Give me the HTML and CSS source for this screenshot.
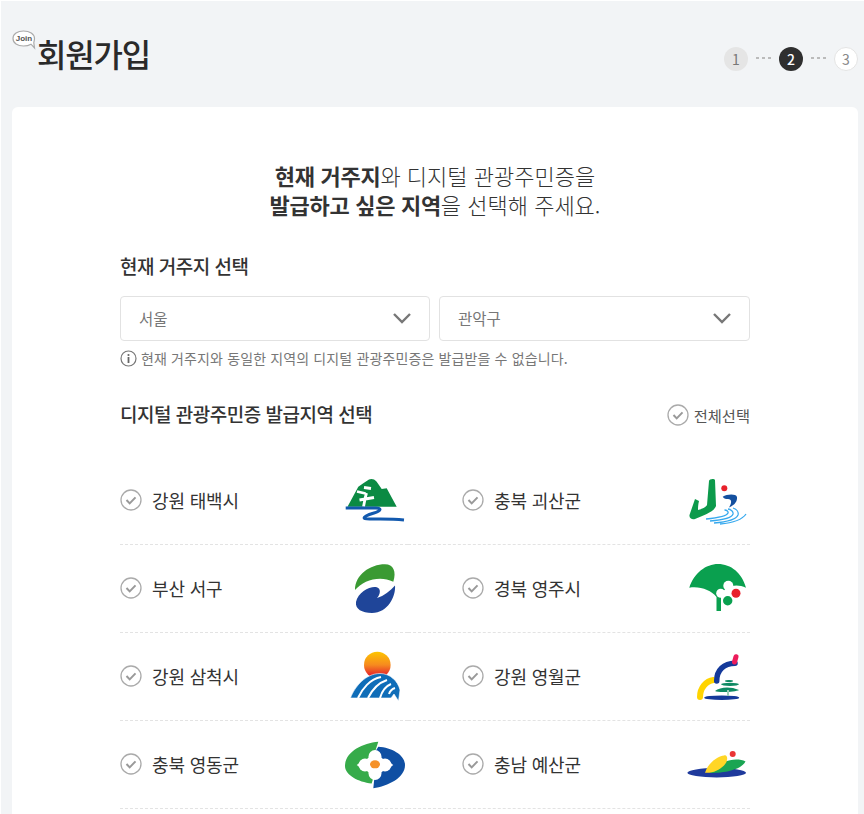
FILE: index.html
```html
<!DOCTYPE html>
<html lang="ko">
<head>
<meta charset="utf-8">
<title>회원가입</title>
<link rel="stylesheet" href="styles.css">
</head>
<body>
<div class="page">
  <header class="head">
    <h1 class="title">
      <svg class="bubble" width="24" height="20" viewBox="0 0 24 20"><path d="M11.500 1C5.500 1 1 3.800 1 8.500S5.500 16 11.500 16c3 0 5.500-.6 7.500-1.800L22.500 18 21.800 12.800C22 11.500 22.500 10 22.500 8.500 22.500 3.800 17.500 1 11.500 1Z" fill="#fff" stroke="#aaa" stroke-width="1.200"/></svg>
      <span class="bubble-text">Join</span>
      회원가입
    </h1>
    <ol class="steps">
      <li class="step step-done">1</li>
      <li class="dots"><i></i><i></i><i></i></li>
      <li class="step step-now">2</li>
      <li class="dots"><i></i><i></i><i></i></li>
      <li class="step step-next">3</li>
    </ol>
  </header>
  <main class="card">
    <p class="lead"><b>현재 거주지</b>와 디지털 관광주민증을<br><b>발급하고 싶은 지역</b>을 선택해 주세요.</p>
    <h2 class="section-title">현재 거주지 선택</h2>
    <div class="selects">
      <div class="select"><span>서울</span><svg width="20" height="12" viewBox="0 0 20 12"><path d="M2 2l8 8 8-8" fill="none" stroke="#777" stroke-width="2.400"/></svg></div>
      <div class="select"><span>관악구</span><svg width="20" height="12" viewBox="0 0 20 12"><path d="M2 2l8 8 8-8" fill="none" stroke="#777" stroke-width="2.400"/></svg></div>
    </div>
    <p class="note"><svg width="17" height="17" viewBox="0 0 17 17"><circle cx="8.500" cy="8.500" r="7.500" fill="none" stroke="#777" stroke-width="1.200"/><circle cx="8.500" cy="5" r="1.100" fill="#666"/><rect x="7.600" y="7" width="1.800" height="6" fill="#666"/></svg>현재 거주지와 동일한 지역의 디지털 관광주민증은 발급받을 수 없습니다.</p>
    <div class="region-head">
      <h2 class="section-title">디지털 관광주민증 발급지역 선택</h2>
      <label class="all"><svg class="check" width="22" height="22" viewBox="0 0 22 22"><circle cx="11" cy="11" r="10" fill="#fff" stroke="#aaa" stroke-width="1.300"/><path d="M6.500 11l3.200 3.400 5.800-6" fill="none" stroke="#999" stroke-width="2"/></svg>전체선택</label>
    </div>
    <ul class="regions">
      <li class="region">
        <svg class="check" width="22" height="22" viewBox="0 0 22 22"><circle cx="11" cy="11" r="10" fill="#fff" stroke="#aaa" stroke-width="1.300"/><path d="M6.500 11l3.200 3.400 5.800-6" fill="none" stroke="#999" stroke-width="2"/></svg>
        <span class="name">강원 태백시</span>
        <svg class="logo" width="64" height="64" viewBox="0 0 64 64"><path d="M3.500 38.700 14.300 18.700 19.300 15.300 25 11.500C27 10.500 30 10.500 32.700 13.700L37.700 21 42.700 20.300 52.700 38.700Z" fill="#0b8a43"/><path d="M19.500 38.700C20.500 34 21 30 22.500 25M13 23.500 21.500 25.500M15.500 32 30 29.500M20 19.500 27 20.500" fill="none" stroke="#fff" stroke-width="2.800"/><path d="M1.700 40H32C38 40 37 43 30 45 23 47 19 49 20.500 50.500 22 52 40 50 60 52" fill="none" stroke="#1259ae" stroke-width="3"/></svg>
      </li>
      <li class="region">
        <svg class="check" width="22" height="22" viewBox="0 0 22 22"><circle cx="11" cy="11" r="10" fill="#fff" stroke="#aaa" stroke-width="1.300"/><path d="M6.500 11l3.200 3.400 5.800-6" fill="none" stroke="#999" stroke-width="2"/></svg>
        <span class="name">충북 괴산군</span>
        <svg class="logo" width="64" height="64" viewBox="0 0 64 64"><path d="M9 31 13 33C12 37 12 40 12 42 16 41 20 39 21 37L23 13C23 11 28 10 29 12L30 38C28 44 18 47 9 51 6 52 3 50 3.500 47Z" fill="#0c9a4b"/><circle cx="38.300" cy="20.300" r="3" fill="#e8212b"/><path d="M36.700 28.700C41 26 50 25.500 51 29 51.500 33 49 37 43 39.500 46 35 46 31 42 31 40 31 38 31 36.700 28.700Z" fill="#14509f"/><path d="M24 53C36 52 46 50 47 46 47.500 43.500 45 41.500 42 41M28 55C40 54 50 52 52 47 53 43.500 50 41 47 40M20 51C30 50 41 48 42 45 42.500 43.500 41 42 38.500 42M34 56C46 55 56 52 60 46" fill="none" stroke="#37a9ee" stroke-width="1.300"/></svg>
      </li>
      <li class="region">
        <svg class="check" width="22" height="22" viewBox="0 0 22 22"><circle cx="11" cy="11" r="10" fill="#fff" stroke="#aaa" stroke-width="1.300"/><path d="M6.500 11l3.200 3.400 5.800-6" fill="none" stroke="#999" stroke-width="2"/></svg>
        <span class="name">부산 서구</span>
        <svg class="logo" width="64" height="64" viewBox="0 0 64 64"><path d="M11 34C11 19 26 8.300 41 8.300 49.300 8.300 52.700 15.700 49.300 25.700 36 19 19.300 24 11 34Z" fill="#3a9a33"/><path d="M12 46C14 36 26 30 32 31 38 32 36 39 33 42 40 40 46 35 51 29.500 52 40 44 57 28 57 18 57 11 53 12 46Z" fill="#1f4599"/></svg>
      </li>
      <li class="region">
        <svg class="check" width="22" height="22" viewBox="0 0 22 22"><circle cx="11" cy="11" r="10" fill="#fff" stroke="#aaa" stroke-width="1.300"/><path d="M6.500 11l3.200 3.400 5.800-6" fill="none" stroke="#999" stroke-width="2"/></svg>
        <span class="name">경북 영주시</span>
        <svg class="logo" width="64" height="64" viewBox="0 0 64 64"><path d="M3.300 31.700C8 17 20 8 32 8 45 8 56 17 60 31.700 50 27 40 30 35 38V55H30.500V41C25 34 14 30 3.300 31.700Z" fill="#0aa04f"/><circle cx="42.300" cy="29.700" r="5" fill="#fff"/><circle cx="34.700" cy="37.300" r="4.500" fill="#fff"/><circle cx="41.700" cy="44.700" r="4.700" fill="#0aa04f"/><circle cx="50" cy="37.300" r="4.500" fill="#e8202c"/></svg>
      </li>
      <li class="region">
        <svg class="check" width="22" height="22" viewBox="0 0 22 22"><circle cx="11" cy="11" r="10" fill="#fff" stroke="#aaa" stroke-width="1.300"/><path d="M6.500 11l3.200 3.400 5.800-6" fill="none" stroke="#999" stroke-width="2"/></svg>
        <span class="name">강원 삼척시</span>
        <svg class="logo" width="64" height="64" viewBox="0 0 64 64"><defs><linearGradient id="sun" x1="0" y1="0" x2="0" y2="1"><stop offset="0" stop-color="#fdc500"/><stop offset=".5" stop-color="#f68a1f"/><stop offset=".9" stop-color="#e6222b"/></linearGradient></defs><circle cx="33.300" cy="21" r="13.300" fill="url(#sun)"/><path d="M6.500 54C11 42 22 29.500 36 29.500 46 29.500 54 37 56 46L54.500 57 50 50 47 54H6.500Z" fill="#0f6db8" stroke="#fff" stroke-width=".6"/><path d="M14 54C18 45 26 35 37 33M24 54C28 46 34 39 43 36M36 54C38 47 42 42 47 40M45 50C46 47 48 45 51 44" fill="none" stroke="#fff" stroke-width="2"/></svg>
      </li>
      <li class="region">
        <svg class="check" width="22" height="22" viewBox="0 0 22 22"><circle cx="11" cy="11" r="10" fill="#fff" stroke="#aaa" stroke-width="1.300"/><path d="M6.500 11l3.200 3.400 5.800-6" fill="none" stroke="#999" stroke-width="2"/></svg>
        <span class="name">강원 영월군</span>
        <svg class="logo" width="64" height="64" viewBox="0 0 64 64"><path d="M14 53C14 44 20 37 27.500 36" fill="none" stroke="#ffd400" stroke-width="6" stroke-linecap="round"/><path d="M30.700 37C30.700 26 38 19.500 49 19.300" fill="none" stroke="#14399a" stroke-width="5.500" stroke-linecap="round"/><path d="M48.500 18 50 12.700" fill="none" stroke="#ec1c5b" stroke-width="5" stroke-linecap="round"/><ellipse cx="35.700" cy="53.700" rx="17.500" ry="2.300" fill="#14399a"/><ellipse cx="43" cy="37" rx="4" ry="1.100" fill="#0e8a63"/><ellipse cx="44" cy="40.300" rx="9" ry="1.600" fill="#0e8a63"/><path d="M29 47C34 43 44 42 53 46 50 48 32 49 29 47Z" fill="#0e8a63"/><rect x="41" y="46" width="2" height="6" fill="#9bcdb8"/></svg>
      </li>
      <li class="region">
        <svg class="check" width="22" height="22" viewBox="0 0 22 22"><circle cx="11" cy="11" r="10" fill="#fff" stroke="#aaa" stroke-width="1.300"/><path d="M6.500 11l3.200 3.400 5.800-6" fill="none" stroke="#999" stroke-width="2"/></svg>
        <span class="name">충북 영동군</span>
        <svg class="logo" width="64" height="64" viewBox="0 0 64 64"><path d="M34.300 9.700C18 11 1 20 1 34 1 43 14 50 27.700 51.500L31 40V20Z" fill="#36ab4a"/><path d="M34.300 14.700C48 15.500 61 23 61 33 61 46 44 54 29.300 56.300L31 40V20Z" fill="#0f4fa3"/><g fill="#fff"><circle cx="31" cy="33" r="10"/><circle cx="21" cy="33" r="6.500"/><circle cx="41" cy="33" r="6.500"/><circle cx="31" cy="24.500" r="6.500"/><circle cx="31" cy="41.500" r="6.500"/><path d="M12.700 33 21 27V39ZM49.300 33 41 27V39Z"/></g><ellipse cx="31" cy="32.300" rx="5" ry="4" fill="#f5922a"/></svg>
      </li>
      <li class="region">
        <svg class="check" width="22" height="22" viewBox="0 0 22 22"><circle cx="11" cy="11" r="10" fill="#fff" stroke="#aaa" stroke-width="1.300"/><path d="M6.500 11l3.200 3.400 5.800-6" fill="none" stroke="#999" stroke-width="2"/></svg>
        <span class="name">충남 예산군</span>
        <svg class="logo" width="64" height="64" viewBox="0 0 64 64"><ellipse cx="30.700" cy="40.700" rx="29.300" ry="4.700" fill="#1f3a9c"/><path d="M24 41C38 41 55 38 59.500 29.500 54 26.500 45 27 38 30Z" fill="#1aa553"/><path d="M19 40.700C22 31 32 24 38 23.500 42 22 42.500 29 38 33.500 33 38.500 26 41.500 19 40.700Z" fill="#ffd626"/><circle cx="46.700" cy="22" r="3" fill="#ea3434"/></svg>
      </li>
    </ul>
  </main>
</div>
</body>
</html>
```

FILE: styles.css
```css
* { box-sizing: border-box; }
html, body { margin: 0; height: 814px; overflow: hidden; background: #fff; }
body {
  padding: 1px 0 0 1px;
  font-family: "Noto Sans CJK KR", "Noto Sans", sans-serif;
  color: #333;
}
.page { background: #f2f4f6; height: 813px; padding: 0 6px 0 11px; overflow: hidden; }
.head { height: 106px; display: flex; justify-content: space-between; align-items: center; position: relative; }
.title {
  position: relative;
  margin: 0 0 0 25px;
  font-size: 32px;
  font-weight: 500;
  letter-spacing: -1.200px;
  line-height: 44px;
  top: -1px;
  color: #2a2a2a;
}
.bubble { position: absolute; left: -25px; top: -1px; }
.bubble-text {
  position: absolute;
  left: -24px;
  top: -1px;
  width: 22px;
  text-align: center;
  font-family: "Liberation Sans", sans-serif;
  font-size: 8px;
  font-weight: 700;
  letter-spacing: 0;
  line-height: 17px;
  color: #555;
}
.steps { list-style: none; margin: 0; padding: 0; display: flex; align-items: center; position: relative; top: 5px; }
.step {
  width: 24px;
  height: 24px;
  border-radius: 50%;
  display: flex;
  align-items: center;
  justify-content: center;
  font-size: 14px;
  line-height: 1;
}
.step-done { background: #e5e5e5; color: #777; }
.step-now { background: #2f2f2f; color: #fff; font-weight: 500; }
.step-next { background: #fff; color: #888; border: 1px solid #e4e4e4; }
.dots { width: 31px; display: flex; justify-content: center; gap: 3px; position: relative; top: -1px; }
.dots i { width: 3px; height: 2px; background: #bbb; }
.card {
  background: #fff;
  border-radius: 6px 6px 0 0;
  height: 720px;
  padding: 54px 108px 0;
}
.lead {
  margin: 0;
  text-align: center;
  font-size: 22px;
  line-height: 29px;
  font-weight: 300;
  letter-spacing: 0;
  color: #333;
}
.lead b { font-weight: 700; letter-spacing: -.3px; }
.section-title { margin: 0; font-size: 19px; font-weight: 500; line-height: 30px; letter-spacing: -.5px; color: #333; }
.lead + .section-title { margin-top: 32px; }
.selects { display: grid; grid-template-columns: 310px 311px; gap: 9px; margin-top: 15px; }
.select {
  height: 45px;
  border: 1px solid #e2e2e2;
  border-radius: 4px;
  display: flex;
  align-items: center;
  justify-content: space-between;
  padding: 0 17px 2px 18px;
  font-size: 15.500px;
  color: #777;
}
.note { margin: 6px 0 0; display: flex; align-items: center; gap: 4px; font-size: 14px; line-height: 22px; letter-spacing: .13px; color: #777; }
.region-head { display: flex; justify-content: space-between; align-items: center; margin-top: 30px; }
.all { display: flex; align-items: center; gap: 5px; font-size: 15.300px; font-weight: 400; color: #555; position: relative; top: 1px; }
.regions {
  list-style: none;
  margin: 28px 0 0;
  padding: 0;
  display: grid;
  grid-template-columns: 288px 342px;
}
.region {
  height: 88px;
  display: flex;
  align-items: center;
  gap: 10px;
  padding-bottom: 2px;
  border-bottom: 1px dashed #e3e3e3;
}
.region:nth-child(even) { padding-left: 54px; }
.name { font-size: 18px; color: #333; flex: 1; letter-spacing: -.15px; }
.logo { flex: none; }
.check { flex: none; }
```
